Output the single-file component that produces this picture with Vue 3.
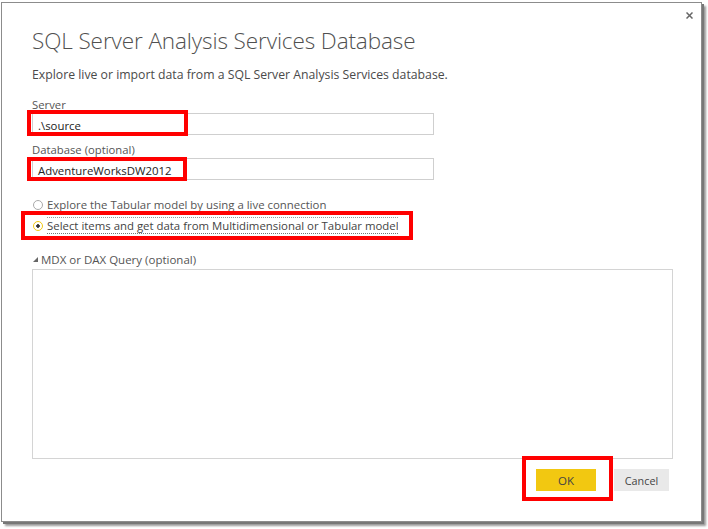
<script setup>
const options = [
  { id: 'live', label: 'Explore the Tabular model by using a live connection', checked: false },
  { id: 'select', label: 'Select items and get data from Multidimensional or Tabular model', checked: true }
]
</script>

<template>
  <div class="page">
    <div class="dialog">
      <button class="close" type="button" aria-label="Close">
        <svg width="7" height="7" viewBox="0 0 7 7">
          <path d="M.5.5l6 6M6.500.5l-6 6" stroke="#666" stroke-width="1.500" fill="none" />
        </svg>
      </button>

      <h1>SQL Server Analysis Services Database</h1>
      <p class="intro">Explore live or import data from a SQL Server Analysis Services database.</p>

      <label class="field-label">Server</label>
      <div class="input server">
        .\source
        <span class="mark mark-server"></span>
      </div>

      <label class="field-label db-label">Database (optional)</label>
      <div class="input database">
        AdventureWorksDW2012
        <span class="mark mark-db"></span>
      </div>

      <div class="options">
        <div v-for="o in options" :key="o.id" class="option">
          <span class="radio" :class="{ on: o.checked }"></span>
          <span class="option-text" :class="{ focused: o.checked }">{{ o.label }}</span>
        </div>
        <span class="mark mark-radio"></span>
      </div>

      <div class="query-label">
        <span class="arrow"></span>
        MDX or DAX Query (optional)
      </div>
      <div class="query"></div>

      <div class="actions">
        <div class="ok-wrap">
          <button class="btn ok" type="button">OK</button>
          <span class="mark mark-ok"></span>
        </div>
        <button class="btn cancel" type="button">Cancel</button>
      </div>
    </div>
  </div>
</template>

<style>
html, body {
  margin: 0;
  background: #fff;
}
</style>

<style scoped>
.page {
  width: 708px;
  height: 529px;
  padding: 2px 0 0 1px;
  box-sizing: border-box;
  overflow: hidden;
}

.dialog {
  position: relative;
  width: 701px;
  height: 520px;
  box-sizing: border-box;
  padding: 24px 30px 0 30px;
  background: #fff;
  border: 1px solid #8c8c8c;
  box-shadow: 2px 2px 0 #777, 4px 4px 2px #999;
  font-family: "Open Sans", "Liberation Sans", sans-serif;
  color: #555;
}

.close {
  position: absolute;
  top: 9px;
  right: 8px;
  width: 7px;
  height: 7px;
  padding: 0;
  border: none;
  background: none;
  display: flex;
}

h1 {
  margin: 0;
  font-size: 22.500px;
  letter-spacing: -0.100px;
  line-height: 28px;
  font-weight: 300;
  color: #505050;
  white-space: nowrap;
}

.intro {
  margin: 11px 0 0;
  font-size: 12.250px;
  line-height: 17px;
  color: #4a4a4a;
  white-space: nowrap;
}

.field-label {
  display: block;
  margin-top: 14px;
  font-size: 11.300px;
  line-height: 16px;
  color: #555;
}

.db-label {
  margin-top: 7px;
}

.input {
  position: relative;
  width: 402px;
  height: 22px;
  margin-top: 0;
  box-sizing: border-box;
  border: 1px solid #cfcfcf;
  padding-left: 5px;
  font-size: 11.400px;
  line-height: 23px;
  color: #222;
}

.options {
  position: relative;
  margin-top: 14px;
}

.option {
  display: flex;
  align-items: center;
  height: 21px;
  font-size: 11.400px;
  white-space: nowrap;
}

.radio {
  width: 10px;
  height: 10px;
  margin-left: 1px;
  margin-right: 4px;
  flex: none;
  box-sizing: border-box;
  border: 1px solid #aaa;
  border-radius: 50%;
}

.radio.on {
  border: 1.500px solid #f2c811;
  background: radial-gradient(circle, #333 0 1.500px, #fff 2px);
}

.option-text {
  color: #555;
}

.option-text.focused {
  width: 351px;
  overflow: hidden;
  border-top: 1px dotted #999;
  border-bottom: 1px dotted #777;
  line-height: 15px;
  color: #444;
}

.query-label {
  display: flex;
  align-items: center;
  margin-top: 15px;
  height: 16px;
  font-size: 11.500px;
  color: #555;
}

.arrow {
  width: 0;
  height: 0;
  margin-left: 1px;
  margin-right: 3px;
  border-left: 5px solid transparent;
  border-bottom: 5px solid #666;
}

.query {
  width: 641px;
  height: 190px;
  margin-top: 2px;
  box-sizing: border-box;
  border: 1px solid #d4d4d4;
}

.actions {
  display: flex;
  justify-content: flex-end;
  gap: 18px;
  margin-top: 10px;
  width: 637px;
}

.ok-wrap {
  position: relative;
  display: flex;
}

.btn {
  height: 22px;
  padding: 0;
  border: none;
  font-family: inherit;
  font-size: 11.500px;
  color: #444;
}

.ok {
  width: 60px;
  background: #f2c811;
}

.cancel {
  width: 55px;
  background: #e9e9e9;
  font-size: 10.800px;
}

/* red highlight boxes drawn over the screenshot */
.mark {
  position: absolute;
  box-sizing: border-box;
  border: 4px solid #f00;
  pointer-events: none;
}

.mark-server {
  left: -6px;
  top: -4px;
  width: 161px;
  height: 26px;
}

.mark-db {
  left: -6px;
  top: -2px;
  width: 160px;
  height: 24px;
}

.mark-radio {
  left: -11px;
  top: 17px;
  width: 392px;
  height: 29px;
}

.mark-ok {
  left: -14px;
  top: -13px;
  width: 91px;
  height: 45px;
}
</style>
